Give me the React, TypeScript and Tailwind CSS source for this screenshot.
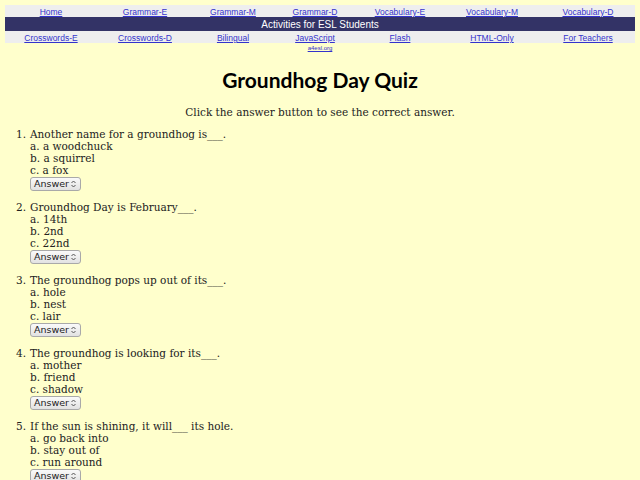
import React from 'react';

const topLinks = ['Home', 'Grammar-E', 'Grammar-M', 'Grammar-D', 'Vocabulary-E', 'Vocabulary-M', 'Vocabulary-D'];
const bottomLinks = ['Crosswords-E', 'Crosswords-D', 'Bilingual', 'JavaScript', 'Flash', 'HTML-Only', 'For Teachers'];
const colWidths = ['w-[92px]', 'w-[96px]', 'w-[80px]', 'w-[84px]', 'w-[86px]', 'w-[98px]', 'w-[94px]'];

const questions = [
    { q: 'Another name for a groundhog is___.', a: ['a woodchuck', 'a squirrel', 'a fox'] },
    { q: 'Groundhog Day is February___.', a: ['14th', '2nd', '22nd'] },
    { q: 'The groundhog pops up out of its___.', a: ['hole', 'nest', 'lair'] },
    { q: 'The groundhog is looking for its___.', a: ['mother', 'friend', 'shadow'] },
    { q: 'If the sun is shining, it will___ its hole.', a: ['go back into', 'stay out of', 'run around'] },
];

const NavRow = ({ links }: { links: string[] }) => (
    <div className="flex h-[12px] items-center bg-[#eeeeee] font-['Liberation_Sans',Arial,sans-serif]">
        {links.map((l, i) => (
            <div key={l} className={`${colWidths[i]} text-center leading-[12px]`}>
                <a href="#" className="text-[8.5px] text-[#3333cc] underline">{l}</a>
            </div>
        ))}
    </div>
);

const AnswerSelect = () => (
    <div className="mt-[1px] flex h-[14px] w-[51px] items-center justify-between rounded-[3px] border border-[#a9a9a9] bg-gradient-to-b from-[#fafafa] to-[#e2e2e2] pl-[3px] pr-[4px] font-['DejaVu_Sans',sans-serif] text-[9.5px] leading-none text-[#222]">
        <span>Answer</span>
        <svg className="shrink-0" width="5" height="8" viewBox="0 0 5 8" fill="none" stroke="#555" strokeWidth="1">
            <path d="M0.5 3 L2.5 1 L4.5 3" />
            <path d="M0.5 5 L2.5 7 L4.5 5" />
        </svg>
    </div>
);

const App: React.FC = () => {
    return (
        <div className="min-h-[480px] bg-[#ffffcc] pt-[5px] font-['DejaVu_Serif',serif] text-[#222]">
            <div className="mx-[5px] w-[630px]">
                <NavRow links={topLinks} />
                <div className="flex h-[14px] items-center justify-center bg-[#333366] font-['Liberation_Sans',Arial,sans-serif] text-[10px] text-white">
                    Activities for ESL Students
                </div>
                <NavRow links={bottomLinks} />
            </div>
            <div className="mt-[1px] text-center font-['Liberation_Sans',Arial,sans-serif] text-[6px] leading-[8px]">
                <a href="#" className="text-[#3333cc] underline">a4esl.org</a>
            </div>
            <h1 className="mt-[15px] text-center font-['Lato',sans-serif] text-[21px] font-bold leading-[26px] text-black">
                Groundhog Day Quiz
            </h1>
            <p className="mt-[13px] text-center text-[10.5px] leading-[12px]">
                Click the answer button to see the correct answer.
            </p>
            <ol className="mt-[10px] pl-[16px] text-[10.5px] leading-[12px]">
                {questions.map((item, i) => (
                    <li key={i} className="mb-[10px] flex">
                        <span className="w-[14px]">{i + 1}.</span>
                        <div>
                            <div>{item.q}</div>
                            {item.a.map((ans, j) => (
                                <div key={j}>{'abc'[j]}. {ans}</div>
                            ))}
                            <AnswerSelect />
                        </div>
                    </li>
                ))}
            </ol>
        </div>
    );
};

export default App;
